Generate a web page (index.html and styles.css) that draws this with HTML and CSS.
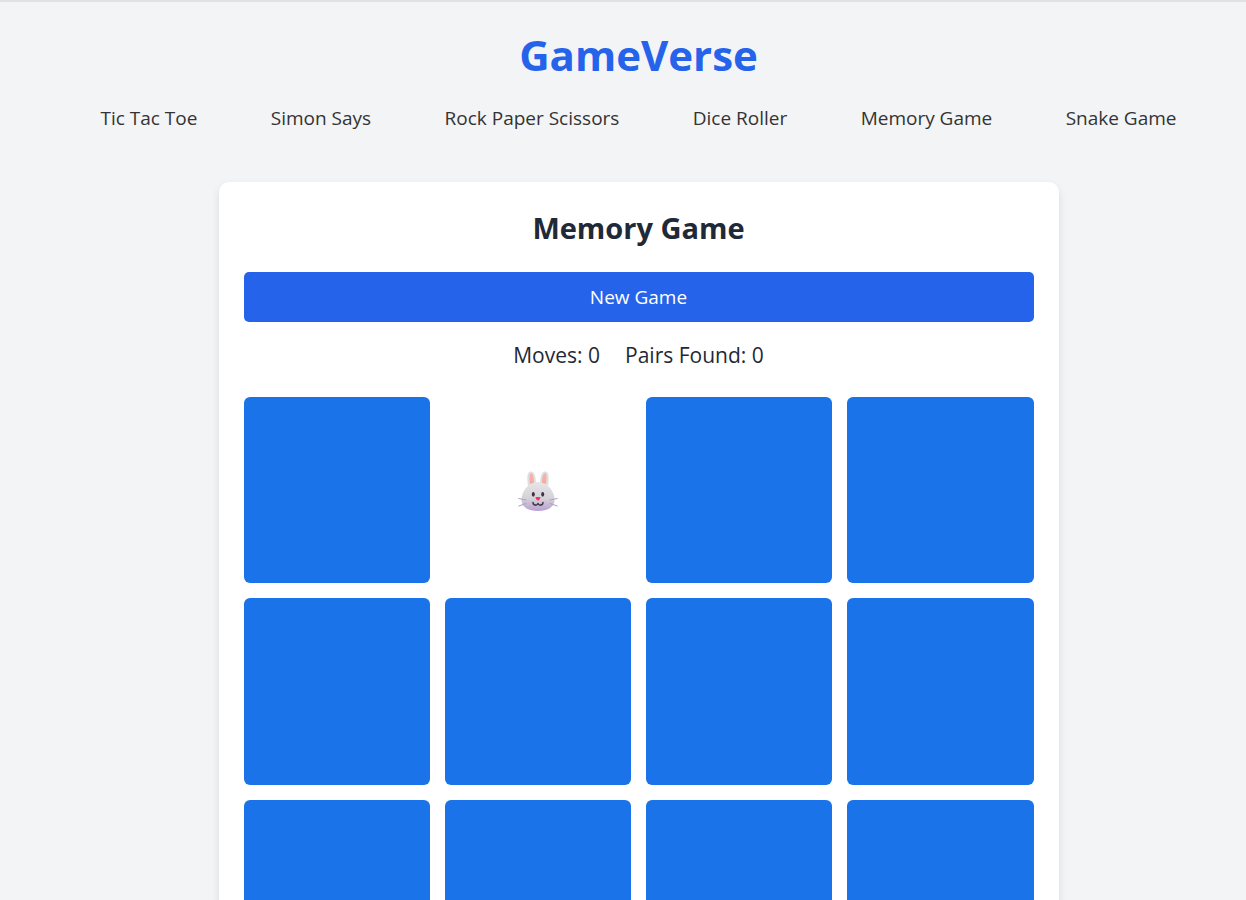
FILE: index.html
```html
<!DOCTYPE html>
<html lang="en">
<head>
<meta charset="utf-8">
<meta name="viewport" content="width=device-width, initial-scale=1">
<title>GameVerse</title>
<link rel="stylesheet" href="styles.css">
</head>
<body class="page">
<header class="header">
  <h1 class="brand">GameVerse</h1>
  <nav class="nav">
    <a class="nav-link" href="#tic-tac-toe">Tic Tac Toe</a>
    <a class="nav-link" href="#simon-says">Simon Says</a>
    <a class="nav-link" href="#rock-paper-scissors">Rock Paper Scissors</a>
    <a class="nav-link" href="#dice-roller">Dice Roller</a>
    <a class="nav-link" href="#memory-game">Memory Game</a>
    <a class="nav-link" href="#snake-game">Snake Game</a>
  </nav>
</header>
<main class="game" id="memory-game">
  <h2 class="game-title">Memory Game</h2>
  <button class="new-game" type="button">New Game</button>
  <div class="stats"><span>Moves: 0</span><span>Pairs Found: 0</span></div>
  <div class="board">
    <button class="card" type="button" aria-label="Card 1"></button>
    <button class="card card-open" type="button" aria-label="Card 2, rabbit">
      <svg class="rabbit" viewBox="0 0 40 40" aria-hidden="true">
        <defs>
          <linearGradient id="fur" x1="0" y1="0" x2="0" y2="1">
            <stop offset="0" stop-color="#e6e5e7"/>
            <stop offset=".55" stop-color="#d6d3d8"/>
            <stop offset="1" stop-color="#b8a0d4"/>
          </linearGradient>
          <linearGradient id="ear" x1="0" y1="0" x2="0" y2="1">
            <stop offset="0" stop-color="#f2b5ad"/>
            <stop offset="1" stop-color="#f6aaa0"/>
          </linearGradient>
        </defs>
        <path fill="#dfdfe1" d="M10 15C9 8 8.500 1 12.500.500C17 0 18 7 18 14ZM30 15C31 8 31.500 1 27.500.500C23 0 22 7 22 14Z"/>
        <path fill="url(#ear)" d="M12 13C11.300 8 11 2.500 13 2.300C15.300 2.200 16 8 16 13ZM28 13C28.700 8 29 2.500 27 2.300C24.700 2.200 24 8 24 13Z"/>
        <path fill="url(#fur)" d="M20 11C29 11 36.500 20 36.500 28.500C36.500 36 30 40 20 40S3.500 36 3.500 28.500C3.500 20 11 11 20 11Z"/>
        <path fill="none" stroke="#aaa1bd" stroke-width="1" stroke-linecap="round" d="M.700 27.500L8 29M.700 35L8 32.500M39.300 27.500L32 29M39.300 35L32 32.500"/>
        <ellipse cx="15.300" cy="23.300" rx="1.500" ry="2.400" fill="#3d3540"/>
        <ellipse cx="24.700" cy="23.300" rx="1.500" ry="2.400" fill="#3d3540"/>
        <path fill="none" stroke="#433843" stroke-width="1.500" stroke-linecap="round" stroke-linejoin="round" d="M15 31.500C15 34.800 19 34.800 20 32.500C21 34.800 25 34.800 25 31.500"/>
        <path fill="#f92f75" d="M18.500 26H21.500C23.200 26.200 22.500 27.700 20.800 29.200Q20 30 19.200 29.200C17.500 27.700 16.800 26.200 18.500 26Z"/>
      </svg>
    </button>
    <button class="card" type="button" aria-label="Card 3"></button>
    <button class="card" type="button" aria-label="Card 4"></button>
    <button class="card" type="button" aria-label="Card 5"></button>
    <button class="card" type="button" aria-label="Card 6"></button>
    <button class="card" type="button" aria-label="Card 7"></button>
    <button class="card" type="button" aria-label="Card 8"></button>
    <button class="card" type="button" aria-label="Card 9"></button>
    <button class="card" type="button" aria-label="Card 10"></button>
    <button class="card" type="button" aria-label="Card 11"></button>
    <button class="card" type="button" aria-label="Card 12"></button>
  </div>
</main>
</body>
</html>
```
FILE: styles.css
```css
* {
  box-sizing: border-box;
}

.page {
  height: 100vh;
  margin: 0;
  padding: 24px 0 0 31px;
  overflow: hidden;
  border-top: 2px solid #e0e2e0;
  background: #f3f4f6;
  color: #1f2937;
  font-family: "Segoe UI", "Open Sans", "Noto Sans", sans-serif;
}

.header {
  margin-bottom: 48px;
  text-align: center;
}

.brand {
  margin: 0 0 18px;
  color: #2563eb;
  font-size: 42px;
  font-weight: 700;
  line-height: 58px;
}

.nav {
  display: flex;
  justify-content: space-between;
  max-width: 1076px;
  margin: 0 auto;
}

.nav-link {
  color: #333;
  font-size: 19px;
  line-height: 32px;
  text-decoration: none;
  white-space: nowrap;
}

.game {
  max-width: 840px;
  margin: 0 auto;
  padding: 25px;
  border-radius: 10px;
  background: #fff;
  box-shadow: 0 4px 8px rgba(0, 0, 0, 0.1);
}

.game-title {
  margin: 0 0 24px;
  font-size: 29px;
  font-weight: 700;
  line-height: 41px;
  text-align: center;
}

.new-game {
  display: block;
  width: 100%;
  height: 50px;
  padding: 0;
  border: 0;
  border-radius: 5px;
  background: #2563eb;
  color: #fff;
  font: 500 19px "Segoe UI", "Open Sans", "Noto Sans", sans-serif;
  cursor: pointer;
}

.stats {
  display: flex;
  justify-content: center;
  gap: 25px;
  margin: 16px 0 25px;
  font-size: 21px;
  line-height: 34px;
}

.board {
  display: grid;
  grid-template-columns: repeat(4, 1fr);
  gap: 15px;
}

.card {
  display: flex;
  align-items: center;
  justify-content: center;
  aspect-ratio: 1;
  padding: 2px 0 0;
  border: 0;
  border-radius: 6px;
  background: #1a73e8;
  cursor: pointer;
}

.card-open {
  background: #fff;
}

.rabbit {
  width: 40px;
  height: 40px;
}
```
